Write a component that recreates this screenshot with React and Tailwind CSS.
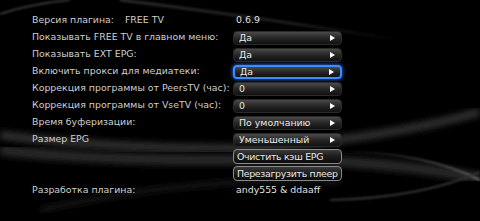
import React from 'react';

const rows = [
  { label: 'Версия плагина:', extra: 'FREE TV', value: '0.6.9' },
  { label: 'Показывать FREE TV в главном меню:', select: 'Да' },
  { label: 'Показывать EXT EPG:', select: 'Да' },
  { label: 'Включить прокси для медиатеки:', select: 'Да', focused: true },
  { label: 'Коррекция программы от PeersTV (час):', select: '0' },
  { label: 'Коррекция программы от VseTV (час):', select: '0' },
  { label: 'Время буферизации:', select: 'По умолчанию' },
  { label: 'Размер EPG', select: 'Уменьшенный' },
  { label: '', action: 'Очистить кэш EPG' },
  { label: '', action: 'Перезагрузить плеер' },
  { label: 'Разработка плагина:', value: 'andy555 & ddaaff' },
];

// background swooshes
const Waves = () => (
  <svg className="absolute inset-0" width="480" height="221" viewBox="0 0 480 221">
    <defs>
      <filter id="blur3"><feGaussianBlur stdDeviation="3" /></filter>
      <filter id="blur1"><feGaussianBlur stdDeviation="1" /></filter>
      <linearGradient id="fadeR" x1="0" x2="1">
        <stop offset="0" stopColor="#555" stopOpacity="0.5" />
        <stop offset="0.6" stopColor="#555" stopOpacity="0.35" />
        <stop offset="1" stopColor="#555" stopOpacity="0" />
      </linearGradient>
      <linearGradient id="fadeL" x1="0" x2="1">
        <stop offset="0" stopColor="#555" stopOpacity="0" />
        <stop offset="0.6" stopColor="#777" stopOpacity="0.5" />
        <stop offset="1" stopColor="#888" stopOpacity="0.7" />
      </linearGradient>
    </defs>
    <path d="M0 14 Q30 4 70 0" stroke="#444" strokeWidth="1.5" fill="none" filter="url(#blur1)" />
    <path d="M120 0 Q250 16 400 40" stroke="url(#fadeR)" strokeWidth="3" fill="none" filter="url(#blur1)" />
    <path d="M340 1 L470 1" stroke="#555" strokeWidth="2" fill="none" filter="url(#blur1)" />
    <path d="M0 135 Q120 150 250 148 Q380 140 480 112" stroke="#333" strokeWidth="8" fill="none" filter="url(#blur3)" />
    <path d="M0 150 Q80 160 220 160 Q360 156 480 178" stroke="#2c2c2c" strokeWidth="10" fill="none" filter="url(#blur3)" />
    <path d="M330 152 Q420 150 480 180" stroke="url(#fadeL)" strokeWidth="2" fill="none" filter="url(#blur1)" />
    <path d="M330 200 Q420 198 480 172" stroke="#333" strokeWidth="2" fill="none" filter="url(#blur1)" />
    <path d="M40 210 Q200 175 340 182" stroke="#262626" strokeWidth="3" fill="none" filter="url(#blur3)" />
  </svg>
);

const Arrow = () => (
  <svg width="5" height="6" viewBox="0 0 5 6"><path d="M0 0 L5 3 L0 6 Z" fill="#fff" /></svg>
);

const SelectBtn = ({ text, focused }) => (
  <div
    className={
      'w-[109px] h-[14px] rounded-[4px] flex items-center justify-between pl-[5px] pr-[6px] bg-gradient-to-b from-[#4a4a4a] via-[#262626] to-[#111] ' +
      (focused
        ? 'border-2 border-[#3d8bff] shadow-[0_0_4px_#2f7bff]'
        : 'border border-[#2a2a2a]')
    }
  >
    <span className="text-[#e8e8e8] leading-none whitespace-nowrap">{text}</span>
    <Arrow />
  </div>
);

const ActionBtn = ({ text }) => (
  <div className="w-[109px] h-[15px] rounded-[4px] flex items-center pl-[3px] border border-[#8a8a8a] bg-gradient-to-b from-[#3a3a3a] via-[#1c1c1c] to-[#0c0c0c]">
    <span className="text-[#e8e8e8] leading-none whitespace-nowrap tracking-[-0.3px]">{text}</span>
  </div>
);

const App = () => {
  return (
    <div className="relative w-[480px] h-[221px] bg-black overflow-hidden font-['DejaVu_Sans',sans-serif] text-[9.4px]">
      <Waves />
      <div className="relative flex flex-col pt-[12px] pl-[32px]">
        {rows.map((r, i) => (
          <div key={i} className="h-[17px] flex items-center">
            <div className="w-[201px] shrink-0 flex text-[#cfcfcf] whitespace-nowrap">
              <span>{r.label}</span>
              {r.extra && <span className="ml-[11px]">{r.extra}</span>}
            </div>
            {r.value && <span className="text-[#e0e0e0] pl-[3px]">{r.value}</span>}
            {r.select && <SelectBtn text={r.select} focused={r.focused} />}
            {r.action && <ActionBtn text={r.action} />}
          </div>
        ))}
      </div>
    </div>
  );
};

export default App;
